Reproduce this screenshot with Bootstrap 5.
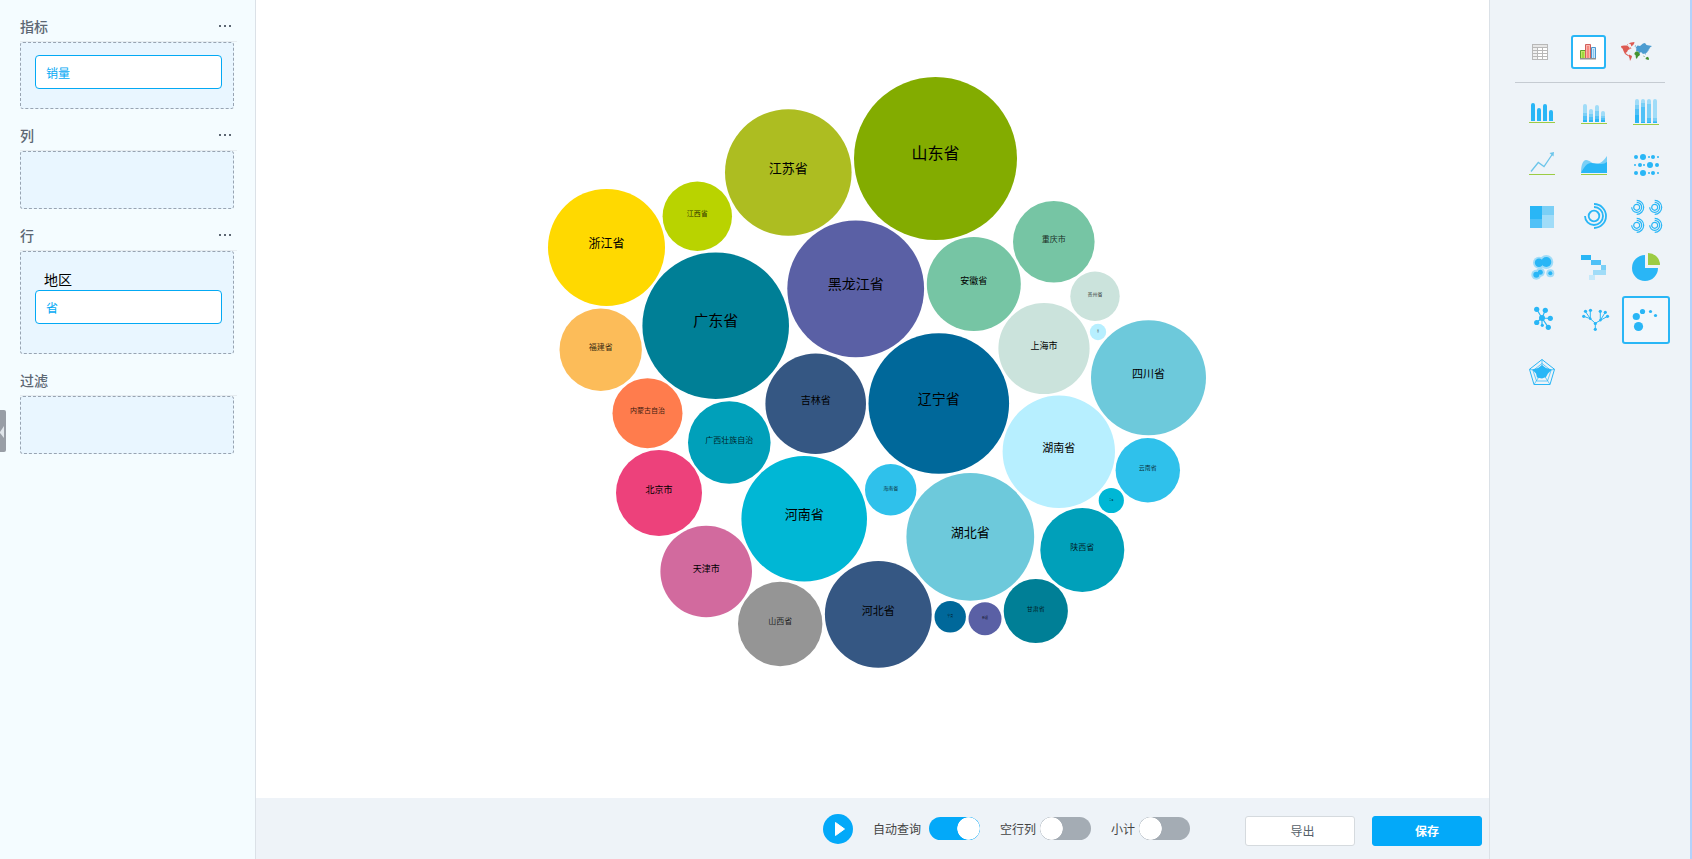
<!DOCTYPE html>
<html lang="zh-CN">
<head>
<meta charset="utf-8">
<meta name="viewport" content="width=device-width, initial-scale=1">
<title>省份销量气泡图</title>
<link href="https://cdn.jsdelivr.net/npm/bootstrap@5.3.0/dist/css/bootstrap.min.css" rel="stylesheet">
<style>
body { font-family: "Noto Sans CJK SC", "Liberation Sans", sans-serif; font-size: 12px; color: #444; background: #eef3f8; }
.fields { width: 256px; background: #f4fcff; border-right: 1px solid #dbe1e7; padding: 0 18px 0 20px; }
.field-head { height: 42px; padding: 10px 6px 0 0; border-bottom: 1px solid #e6ecf0; }
.field-head h2 { font-size: 14px; line-height: 26px; font-weight: 500; color: #5c6773; margin: 0; }
.more { color: #5c6773; line-height: 0; }
.drop { margin-right: 3px; min-height: 58px; border: 1px dashed #98a4b2; border-radius: 3px; background: #e9f6ff; padding: 12px 11px 0 14px; }
.drop.has-one { min-height: 67px; }
.drop.has-group { min-height: 103px; }
.group-name { font-size: 14px; line-height: 22px; color: #000; padding: 4px 0 0 9px; }
.pill { height: 34px; width: 100%; border: 1px solid #03a9f4; border-radius: 4px; background: #fff; color: #03a9f4; padding: 2px 10px 0; line-height: 28px; text-align: left; }
.handle { top: 410px; left: 0; width: 6px; height: 42px; background: #989ea6; border: 0; border-radius: 0 2px 2px 0; padding: 0; line-height: 0; }
.stage { background: #fff; min-height: 0; }
.bubbles { font-family: "Noto Sans CJK SC", sans-serif; text-anchor: middle; fill: #000; }
.s16 { font-size: 16px; } .s15 { font-size: 15px; } .s14 { font-size: 14px; } .s13 { font-size: 13px; }
.s12 { font-size: 12px; } .s11 { font-size: 11px; } .s10 { font-size: 10px; } .s9 { font-size: 9px; }
.s8 { font-size: 8px; } .s7 { font-size: 7px; } .s6 { font-size: 6px; } .s5 { font-size: 5px; } .s3 { font-size: 3px; } .s2 { font-size: 2px; }
.s8, .s7, .s6, .s5, .s3, .s2 { fill-opacity: .8; }
.actions { height: 61px; padding-right: 7px; }
.options { gap: 20px; margin-right: 55px; }
.toggle { gap: 4px; }
.toggle label { line-height: 18px; }
.form-check-input.knob { width: 51px; height: 23px; margin: 0; border: 0; border-radius: 12px; background: #a4acb4 radial-gradient(closest-side, #fff 95%, transparent) no-repeat left center / 23px 23px; }
.form-check-input.knob:checked { background-color: #03a9f9; background-position: right center; background-image: radial-gradient(closest-side, #fff 95%, transparent); }
.run { width: 30px; height: 30px; border: 0; padding: 0; background: none; line-height: 0; }
.wide { width: 110px; height: 30px; padding: 0; font-size: 12px; line-height: 28px; border-radius: 3px; }
.export { background: #fff; border: 1px solid #d5dade; color: #555f69; padding-left: 5px; }
.save { background: #03a9f9; border: 1px solid #03a9f9; color: #fff; font-weight: 700; }
.buttons { gap: 17px; }
.charts { width: 203px; border-left: 1px solid #dbe1e7; border-right: 2px solid #b3d2fb; padding: 35px 20px 0 25px; }
.kinds { gap: 13px; padding-left: 8px; padding-bottom: 13px; margin-right: 5px; border-bottom: 1px solid #c5cbd2; }
.kind { width: 35px; height: 34px; padding: 0; border: 2px solid transparent; border-radius: 3px; background: none; line-height: 0; }
.kind.on { border-color: #29b6f6; background: #fff; }
.types { grid-template-columns: repeat(3, 48px); gap: 4px; margin: 5px 0 0 3px; }
.type { width: 48px; height: 48px; padding: 0; border: 0; border-radius: 3px; background: none; line-height: 0; }
.type.on { background: #f2f7fb; box-shadow: inset 0 0 0 2px #29b6f6; }
.c1 { fill: #29b6f6; } .c2 { fill: #50c1f7; } .c3 { fill: #7acff6; } .c4 { fill: #a0dcf8; } .c5 { fill: #c6e9fa; }
.base { fill: #9ccc44; }
.ln { fill: none; stroke: #29b6f6; }
</style>
</head>
<body>
<div class="d-flex vh-100 overflow-hidden">
  <aside class="fields flex-shrink-0 position-relative">
    <section>
      <div class="field-head d-flex justify-content-between align-items-center"><h2>指标</h2>
        <button class="btn p-0 border-0 more" type="button" aria-label="指标选项"><svg width="12" height="2" fill="currentColor"><path d="M0 0h2v2H0zM5 0h2v2H5zM10 0h2v2h-2z"/></svg></button></div>
      <div class="drop has-one"><button class="pill d-block" type="button">销量</button></div>
    </section>
    <section>
      <div class="field-head d-flex justify-content-between align-items-center"><h2>列</h2>
        <button class="btn p-0 border-0 more" type="button" aria-label="列选项"><svg width="12" height="2" fill="currentColor"><path d="M0 0h2v2H0zM5 0h2v2H5zM10 0h2v2h-2z"/></svg></button></div>
      <div class="drop"></div>
    </section>
    <section>
      <div class="field-head d-flex justify-content-between align-items-center"><h2>行</h2>
        <button class="btn p-0 border-0 more" type="button" aria-label="行选项"><svg width="12" height="2" fill="currentColor"><path d="M0 0h2v2H0zM5 0h2v2H5zM10 0h2v2h-2z"/></svg></button></div>
      <div class="drop has-group"><div class="group-name">地区</div><button class="pill d-block" type="button">省</button></div>
    </section>
    <section>
      <div class="field-head d-flex justify-content-between align-items-center"><h2>过滤</h2></div>
      <div class="drop"></div>
    </section>
    <button class="handle position-absolute" type="button" aria-label="收起"><svg width="6" height="42"><path d="M0 22 4 16v12L0 23z" fill="#dfe5ea"/></svg></button>
  </aside>

  <main class="d-flex flex-column flex-grow-1">
    <div class="stage flex-grow-1">
      <svg class="bubbles d-block w-100 h-100" viewBox="256 0 1233 798" role="img" aria-label="各省销量">
        <g transform="translate(935.5 158.5)"><circle r="81.5" fill="#83ac00"/><text class="s16" dy=".04em">山东省</text></g>
        <g transform="translate(788.3 172.5)"><circle r="63.3" fill="#adbd21"/><text class="s13" dy=".02em">江苏省</text></g>
        <g transform="translate(697.3 216.3)"><circle r="34.7" fill="#b9d300"/><text class="s7" dy=".02em">江西省</text></g>
        <g transform="translate(606.5 247.4)"><circle r="58.5" fill="#ffd900"/><text class="s12" dy=".02em">浙江省</text></g>
        <g transform="translate(600.7 349.7)"><circle r="41.2" fill="#fcbc59"/><text class="s8" dy=".02em">福建省</text></g>
        <g transform="translate(647.5 413.2)"><circle r="35" fill="#ff7c4d"/><text class="s7" dy=".02em">内蒙古自治</text></g>
        <g transform="translate(659 493)"><circle r="43" fill="#ed417b"/><text class="s9" dy=".02em">北京市</text></g>
        <g transform="translate(706.2 571.5)"><circle r="45.8" fill="#d26a9e"/><text class="s9" dy=".02em">天津市</text></g>
        <g transform="translate(780.2 624)"><circle r="42.2" fill="#959595"/><text class="s8" dy=".02em">山西省</text></g>
        <g transform="translate(878.3 614.3)"><circle r="53.4" fill="#355783"/><text class="s11" dy=".02em">河北省</text></g>
        <g transform="translate(950.2 616.8)"><circle r="15.7" fill="#00689a"/><text class="s3" dy=".02em">宁夏</text></g>
        <g transform="translate(985 618.7)"><circle r="16.5" fill="#5a60a5"/><text class="s3" dy=".02em">新疆</text></g>
        <g transform="translate(1035.8 611)"><circle r="32.1" fill="#007f96"/><text class="s6" dy=".02em">甘肃省</text></g>
        <g transform="translate(1082.3 550)"><circle r="42" fill="#00a0ba"/><text class="s8" dy=".02em">陕西省</text></g>
        <g transform="translate(1111.3 500.5)"><circle r="12.6" fill="#00b7d5"/><text class="s2" dy=".1em">青海</text></g>
        <g transform="translate(1147.8 470.3)"><circle r="32.2" fill="#2fc1eb"/><text class="s6" dy=".02em">云南省</text></g>
        <g transform="translate(1148.5 377.8)"><circle r="57.5" fill="#6dc9db"/><text class="s11" dy=".02em">四川省</text></g>
        <g transform="translate(1098 332)"><circle r="8.2" fill="#b7efff"/><text class="s2" dy=".02em">西</text></g>
        <g transform="translate(1095 296.3)"><circle r="24.7" fill="#cbe3dc"/><text class="s5" dy=".02em">贵州省</text></g>
        <g transform="translate(1053.8 241.8)"><circle r="40.8" fill="#76c5a4"/><text class="s8" dy=".02em">重庆市</text></g>
        <g transform="translate(973.8 284)"><circle r="47" fill="#76c5a4"/><text class="s9" dy=".02em">安徽省</text></g>
        <g transform="translate(855.7 288.8)"><circle r="68.4" fill="#5a60a5"/><text class="s14" dy=".02em">黑龙江省</text></g>
        <g transform="translate(715.7 325.7)"><circle r="73.3" fill="#007f96"/><text class="s15" dy=".02em">广东省</text></g>
        <g transform="translate(729.3 442.5)"><circle r="41.3" fill="#00a0ba"/><text class="s8" dy=".02em">广西壮族自治</text></g>
        <g transform="translate(815.7 403.7)"><circle r="50.3" fill="#355783"/><text class="s10" dy=".02em">吉林省</text></g>
        <g transform="translate(804.2 518.8)"><circle r="62.8" fill="#00b7d5"/><text class="s13" dy=".02em">河南省</text></g>
        <g transform="translate(890.7 489.8)"><circle r="25.7" fill="#2fc1eb"/><text class="s5" dy=".02em">海南省</text></g>
        <g transform="translate(970.3 536.8)"><circle r="63.9" fill="#6dc9db"/><text class="s13" dy=".02em">湖北省</text></g>
        <g transform="translate(938.8 403.5)"><circle r="70.3" fill="#00689a"/><text class="s14" dy=".02em">辽宁省</text></g>
        <g transform="translate(1058.8 451.8)"><circle r="56.2" fill="#b7efff"/><text class="s11" dy=".02em">湖南省</text></g>
        <g transform="translate(1044 348.5)"><circle r="45.6" fill="#cbe3dc"/><text class="s9" dy=".1em">上海市</text></g>
      </svg>
    </div>
    <div class="actions d-flex flex-shrink-0 justify-content-end align-items-center">
      <div class="options d-flex align-items-center">
        <button class="run" type="button" aria-label="运行"><svg width="30" height="30"><circle cx="15" cy="15" r="15" fill="#03a9f9"/><path d="M12.500 8.500v13l9-6.500z" fill="#fff" stroke="#fff" stroke-linejoin="round"/></svg></button>
        <div class="toggle d-flex align-items-center"><label for="auto" class="me-1">自动查询</label><input class="form-check-input knob" type="checkbox" role="switch" id="auto" checked></div>
        <div class="toggle d-flex align-items-center"><label for="empty">空行列</label><input class="form-check-input knob" type="checkbox" role="switch" id="empty"></div>
        <div class="toggle d-flex align-items-center"><label for="subtotal">小计</label><input class="form-check-input knob" type="checkbox" role="switch" id="subtotal"></div>
      </div>
      <div class="buttons d-flex mt-1">
        <button class="btn wide export" type="button">导出</button>
        <button class="btn wide save" type="button">保存</button>
      </div>
    </div>
  </main>

  <aside class="charts flex-shrink-0">
    <div class="kinds d-flex">
      <button class="kind" type="button" aria-label="表格"><svg width="18" height="16" viewBox="0 0 18 16"><path d="M0 0h16v16H0z" fill="#b8b8b8"/><path d="M1 1h14v2H1z" fill="#e6e6e6"/><path d="M1 4h4v2H1zM1 7h4v2H1zM1 10h4v2H1zM1 13h4v2H1z" fill="#f0f0f0"/><path d="M6 4h4v2H6zM11 4h4v2h-4zM6 7h4v2H6zM11 7h4v2h-4zM6 10h4v2H6zM11 10h4v2h-4zM6 13h4v2H6zM11 13h4v2h-4z" fill="#fff"/></svg></button>
      <button class="kind on" type="button" aria-label="图表"><svg width="17" height="16"><path d="M.5 6.500h5v8h-5z" fill="#c4e868" stroke="#5da52c"/><path d="M2 8h2v6H2z" fill="#a0d83c"/><path d="M11.500 3.500h4v11h-4z" fill="#c8e8fc" stroke="#4a97cf"/><path d="M13 5h1v9h-1z" fill="#8cc6ee"/><path d="M5.500.5h5v14h-5z" fill="#fbb5ae" stroke="#d0605c"/><path d="M7 2h2v12H7z" fill="#f78880"/><path d="M0 14h16v1.500H0z" fill="#909090"/></svg></button>
      <button class="kind" type="button" aria-label="地图"><svg width="31" height="20">
        <path d="M0 4l3-.5 3 0 2 1.500 1 2-2 1-1 2-1.500 1 2 1.500 1.500 1-1 .5-3-2L2.500 9l-1-2.500L.5 6zM7.500 1.500l2.500-1 3.500-.5-.5 2-2.500 2.500-1-2.500zM6 2l1.500 1.500L6 3zM8.500 4.500l2 2-1 .5zM8 12.500l3 1.500-.5 2-1.500 3-.5-3-.8-1.500z" fill="#dd5a52"/>
        <path d="M15 8.500l.5-2L14.500 6l2-2.500L19 4l3-2.500L24 1l1.500 2L31 4l-2 1.500-1 2-1 .5-.5 2-2 1.500.5 1.500-1.500-1.500L22 12l-2-2-2 1.500L17 9l-1 .5zM13.500 4.500l1-1.500.5 1.500zM26.500 8.500l1-1 0 1.500z" fill="#4b9bd0"/>
        <path d="M13.500 11l1.500-1.500h2l2 2.500-.5 1.500-1.500 1-1 2h-1l-.5-3.500-1-.5zM25 15.500l2-.8 1 2v1h-1.500L24.500 17zM22 13.500l2 1-1 .3z" fill="#44922f"/></svg></button>
    </div>
    <div class="types d-grid">
      <button class="type" type="button" aria-label="柱形图"><svg width="48" height="48"><path class="c1" d="M13 33V17a2 2 0 0 1 4 0v16zM19 33V22a2 2 0 0 1 4 0v11zM25 33V18a2 2 0 0 1 4 0v15zM31 33v-9a2 2 0 0 1 4 0v9z"/><path class="base" d="M11 34h26v1H11z"/></svg></button>
      <button class="type" type="button" aria-label="堆积柱形图"><svg width="48" height="48"><path class="c4" d="M13 34V18a2 2 0 0 1 4 0v16zM19 34V23a2 2 0 0 1 4 0v11zM25 34V19a2 2 0 0 1 4 0v15zM31 34v-9a2 2 0 0 1 4 0v9z"/><path class="c3" d="M13 25h4v9h-4zM19 26h4v8h-4zM25 23h4v11h-4zM31 28h4v6h-4z"/><path class="c2" d="M13 28h4v6h-4zM19 29h4v5h-4zM25 28h4v6h-4zM31 30h4v4h-4z"/><path class="c1" d="M13 32h4v2h-4zM19 32h4v2h-4zM25 31h4v3h-4zM31 32h4v2h-4z"/><path class="base" d="M11 35h26v1H11z"/></svg></button>
      <button class="type" type="button" aria-label="百分比柱形图"><svg width="48" height="48"><path class="c4" d="M13 35V13a2 2 0 0 1 4 0v22zM19 35V13a2 2 0 0 1 4 0v22zM25 35V13a2 2 0 0 1 4 0v22zM31 35V13a2 2 0 0 1 4 0v22z"/><path class="c3" d="M13 17h4v5h-4zM19 15h4v5h-4zM25 16h4v14h-4zM31 30h4v3h-4z"/><path class="c2" d="M13 21h4v6h-4zM19 19h4v15h-4zM25 30h4v4h-4zM31 33h4v1h-4z"/><path class="c1" d="M13 27h4v8h-4zM19 34h4v1h-4zM25 34h4v1h-4zM31 34h4v1h-4z"/><path class="base" d="M11 36h26v1H11z"/></svg></button>
      <button class="type" type="button" aria-label="折线图"><svg width="48" height="48"><path d="M13 31.500 20.300 22.500 26 26.500 34.500 14" fill="none" stroke="#6cc5ea" stroke-width="1.300"/><path d="M31.500 13 36 12l-.5 4.500z" fill="#6cc5ea"/><path class="base" d="M11 34h26v1H11z"/></svg></button>
      <button class="type" type="button" aria-label="面积图"><svg width="48" height="48"><path class="c3" d="M11 33c0-8 2-13 5-13 4 0 6 4 10 4 5 0 8-4 11-8v17z"/><path class="c1" d="M11 33c3-6 6-10 10-10s6 1 10 1c3 0 4-1 6-2v11z"/><path class="base" d="M11 34h26v1H11z"/></svg></button>
      <button class="type" type="button" aria-label="散点矩阵"><svg width="48" height="48"><g class="c1"><circle cx="14" cy="17" r="2"/><circle cx="21" cy="17" r="3"/><circle cx="27" cy="17" r="1"/><circle cx="31" cy="17" r="2"/><circle cx="36" cy="17" r="1"/><circle cx="13" cy="25" r="1"/><circle cx="18" cy="25" r="2"/><circle cx="22" cy="25" r="1"/><circle cx="28" cy="25" r="3"/><circle cx="35" cy="25" r="2"/><circle cx="14" cy="33" r="2"/><circle cx="21" cy="33" r="3"/><circle cx="27" cy="33" r="1"/><circle cx="31" cy="33" r="2"/><circle cx="36" cy="33" r="1"/></g></svg></button>
      <button class="type" type="button" aria-label="矩形树图"><svg width="48" height="48"><path class="c1" d="M12 14h12v13H12z"/><path class="c3" d="M24 14h12v9H24z"/><path class="c2" d="M12 27h12v9H12z"/><path class="c4" d="M24 23h12v13H24z"/></svg></button>
      <button class="type" type="button" aria-label="环形图"><svg width="48" height="48"><g class="ln" stroke-width="1.800"><circle cx="24" cy="24" r="5.300"/><path d="M24 15a9 9 0 1 1-9 9"/><path d="M24 12a12 12 0 0 1 0 24"/></g></svg></button>
      <button class="type" type="button" aria-label="多环形图"><svg width="48" height="48"><defs><g id="ring" class="ln" stroke-width="1.200"><circle r="3"/><path d="M0-5a5 5 0 1 1-5 5"/><path d="M0-7a7 7 0 0 1 0 14"/></g></defs><use href="#ring" x="14.700" y="15.300"/><use href="#ring" x="32.700" y="15.300"/><use href="#ring" x="14.700" y="33.300"/><use href="#ring" x="32.700" y="33.300"/></svg></button>
      <button class="type" type="button" aria-label="热力图"><svg width="48" height="48"><g class="c4"><circle cx="21" cy="18.700" r="6"/><circle cx="28.300" cy="18" r="7"/><circle cx="18.300" cy="30.700" r="5"/><circle cx="22.300" cy="28.300" r="4.500"/><circle cx="32.300" cy="29.300" r="4"/></g><g class="c1"><circle cx="21" cy="18.700" r="4.200"/><circle cx="28.300" cy="18" r="5"/><circle cx="18.300" cy="30.700" r="3"/><circle cx="22.300" cy="28.300" r="2.500"/><circle cx="32.300" cy="29.300" r="2"/></g></svg></button>
      <button class="type" type="button" aria-label="瀑布图"><svg width="48" height="48"><path class="c1" d="M11 11h10v5H11z"/><path class="c2" d="M21 16h10v5H21z"/><path class="c3" d="M31 21h5v5h-5z"/><path class="c4" d="M23 26h13v5H23z"/><path class="c5" d="M19 31h6v5h-6z"/></svg></button>
      <button class="type" type="button" aria-label="饼图"><svg width="48" height="48"><path class="c1" d="M23 24V11a13 13 0 1 0 13 13z"/><path d="M26 21V9a12 12 0 0 1 12 12z" fill="#9ccc44"/></svg></button>
      <button class="type" type="button" aria-label="关系图"><svg width="48" height="48"><path class="ln" d="M18.700 13.300 24 22 27.300 14.300M24 22l8.300.3M24 22l6.300 9.300M24 22v7.300M24 22l-5.300 4.300" stroke-width="1.200"/><g class="c1"><circle cx="24" cy="22" r="3"/><circle cx="18.700" cy="13.300" r="2.600"/><circle cx="27.300" cy="14.300" r="2.600"/><circle cx="32.300" cy="22.300" r="2.600"/><circle cx="30.300" cy="31.300" r="2.600"/><circle cx="24.300" cy="29.300" r="1.600"/><circle cx="18.700" cy="26.500" r="2.600"/></g></svg></button>
      <button class="type" type="button" aria-label="树图"><svg width="48" height="48"><path class="ln" d="M25.300 33.300v-6l-5-4.600-6.600-2.400M20.300 22.700l-5-7.400M20.300 22.700v-8.400M25.300 27.300l5-3v-9M30.300 24.300l5-8M30.300 24.300l7.400-4"/><g class="c1"><circle cx="25.300" cy="33.300" r="1.600"/><circle cx="25.300" cy="27.500" r="1.600"/><circle cx="20.300" cy="22.700" r="1.300"/><circle cx="30.300" cy="24.300" r="1.300"/><circle cx="13.700" cy="20.300" r="1.600"/><circle cx="15.500" cy="15.300" r="1.600"/><circle cx="20.500" cy="14.300" r="1.600"/><circle cx="30.300" cy="15.300" r="1.600"/><circle cx="35.300" cy="16.300" r="1.600"/><circle cx="37.500" cy="20.300" r="1.600"/></g></svg></button>
      <button class="type on" type="button" aria-label="气泡图"><svg width="48" height="48"><g class="c1"><circle cx="14.300" cy="20.500" r="3.600"/><circle cx="20.500" cy="15.500" r="2.600"/><circle cx="28.500" cy="15.500" r="1.600"/><circle cx="33.500" cy="19.500" r="1.600"/><circle cx="16.500" cy="30.500" r="4.600"/></g></svg></button>
      <button class="type" type="button" aria-label="雷达图"><svg width="48" height="48"><g class="ln"><path d="M24 11.500 36.500 21.300 32 36.500H16L11.500 21.300z"/><path d="M24 15.500 33 22.500 29.500 33h-11L15 22.500z" stroke-width=".7"/><path d="M24 11.500v10M36.500 21.300 24 24M32 36.500 24 24l-8 12.500M11.500 21.300 24 24" stroke-width=".7"/></g><path class="c1" d="M14 21.500l6-1.500 4-3 4 3 6 1.500-4 4-2 3.500-4 1.500-5-1-1-4z"/></svg></button>
    </div>
  </aside>
</div>
<script src="https://cdn.jsdelivr.net/npm/bootstrap@5.3.0/dist/js/bootstrap.bundle.min.js"></script>
</body>
</html>
